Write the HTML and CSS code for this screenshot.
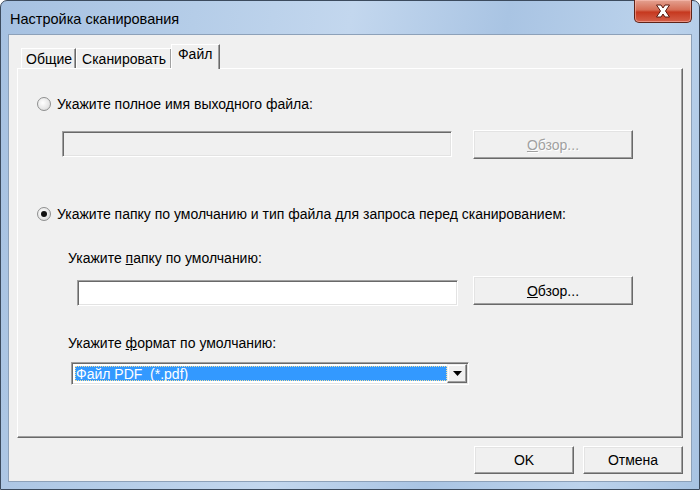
FILE: index.html
```html
<!DOCTYPE html>
<html lang="ru">
<head>
    <meta charset="UTF-8">
    <title>Настройка сканирования</title>
    <link rel="stylesheet" href="styles.css">
</head>
<body>
    <div class="window">
        <div class="titlebar">
            <span class="title">Настройка сканирования</span>
            <div class="close-btn">
                <svg width="24" height="16" viewBox="0 0 24 16">
                    <path d="M5.5 2 L10 2 L12 5 L14 2 L18.5 2 L14.5 8 L18.5 14 L14 14 L12 11 L10 14 L5.5 14 L9.5 8 Z" fill="#fff" stroke="#5a1a10" stroke-width="1" stroke-linejoin="round"/>
                </svg>
            </div>
        </div>
        <div class="client">
            <!-- Tabs -->
            <div class="tabs">
                <div class="tab">Общие</div>
                <div class="tab">Сканировать</div>
                <div class="tab active">Файл</div>
            </div>
            <div class="panel">
                <div class="opt">
                    <span class="radio"></span>
                    <span>Укажите полное имя выходного файла:</span>
                </div>
                <div class="field-row first">
                    <div class="edit disabled"></div>
                    <div class="btn browse disabled"><u>О</u>бзор...</div>
                </div>

                <div class="opt second">
                    <span class="radio checked"></span>
                    <span>Укажите папку по умолчанию и тип файла для запроса перед сканированием:</span>
                </div>
                <div class="label folder-label">Укажите <u>п</u>апку по умолчанию:</div>
                <div class="field-row folder">
                    <div class="edit"></div>
                    <div class="btn browse"><u>О</u>бзор...</div>
                </div>
                <div class="label format-label">Укажите <u>ф</u>ормат по умолчанию:</div>
                <div class="combo">
                    <div class="combo-value"><span>Файл PDF&nbsp; (*.pdf)</span></div>
                    <div class="combo-arrow">
                        <svg width="9" height="5" viewBox="0 0 9 5"><path d="M0 0 H9 L4.5 5 Z" fill="#000"/></svg>
                    </div>
                </div>
            </div>
            <div class="footer">
                <div class="btn dlg">OK</div>
                <div class="btn dlg">Отмена</div>
            </div>
        </div>
    </div>
</body>
</html>
```

FILE: styles.css
```css
body {
    margin: 0;
    padding: 0;
    font-family: "Liberation Sans", Arial, sans-serif;
    font-size: 14px;
    color: #000;
}
.window {
    width: 700px;
    height: 490px;
    box-sizing: border-box;
    border: 1px solid #3c4b5e;
    border-radius: 7px 7px 0 0;
    background: linear-gradient(100deg, #a6c1e1 0%, #b5cde8 25%, #c3d7ee 45%, #a9c4e3 65%, #bcd3ec 85%, #a8c3e2 100%);
    display: flex;
    flex-direction: column;
}
.titlebar {
    height: 33px;
    display: flex;
    align-items: flex-start;
    justify-content: space-between;
    padding-left: 9px;
}
.title {
    font-size: 14.5px;
    line-height: 15px;
    margin-top: 11px;
    color: #000;
}
.close-btn {
    width: 58px;
    height: 23px;
    margin-right: 7px;
    margin-top: -1px;
    box-sizing: border-box;
    border: 1px solid #5e2318;
    border-top: none;
    border-radius: 0 0 5px 5px;
    background: linear-gradient(#e4a291 0%, #d66d55 45%, #c6381f 55%, #d5604a 100%);
    box-shadow: inset 0 0 0 1px rgba(255, 200, 190, 0.5);
    display: flex;
    align-items: center;
    justify-content: center;
}
.client {
    flex: 1;
    margin: 0 7px 7px 7px;
    background: #f0f0f0;
    border: 1px solid #8da1b9;
    padding: 9px 8px 0 8px;
}
.tabs {
    display: flex;
    align-items: flex-end;
    height: 24px;
    padding-left: 4px;
    position: relative;
    z-index: 1;
}
.tab {
    height: 20px;
    line-height: 20px;
    padding: 0 5px;
    box-sizing: border-box;
    border: 1px solid #fff;
    border-right-color: #696969;
    border-bottom: none;
    box-shadow: inset -1px 0 #a0a0a0;
    background: #f0f0f0;
}
.tab:first-child {
    padding: 0 3px 0 4px;
}
.tab.active {
    height: 25px;
    line-height: 19px;
    padding: 0 7px 0 6px;
    margin-left: -1px;
    margin-bottom: -1px;
}
.panel {
    height: 370px;
    box-sizing: border-box;
    border: 1px solid #fff;
    border-right-color: #696969;
    border-bottom-color: #696969;
    box-shadow: inset -1px -1px #a0a0a0;
    padding-top: 27px;
}
.opt {
    display: flex;
    align-items: center;
    height: 15px;
    padding-left: 19px;
}
.opt.second {
    margin-top: 47px;
}
.radio {
    width: 12px;
    height: 12px;
    border: 1px solid #8e8f8f;
    border-radius: 50%;
    background: radial-gradient(circle at 40% 40%, #ffffff 0%, #e6e6e6 60%, #cfcfcf 100%);
    margin-right: 6px;
    display: flex;
    align-items: center;
    justify-content: center;
}
.radio.checked::after {
    content: "";
    width: 6px;
    height: 6px;
    border-radius: 50%;
    background: #111;
}
.field-row {
    display: flex;
    align-items: flex-start;
}
.field-row.first {
    margin-top: 19px;
    padding-left: 44px;
    gap: 21px;
}
.field-row.first .edit {
    width: 390px;
    margin-top: 1px;
}
.field-row.folder {
    margin-top: 10px;
    padding-left: 59px;
    gap: 15px;
}
.field-row.folder .edit {
    width: 381px;
    margin-top: 4px;
    background: #fff;
}
.edit {
    height: 26px;
    box-sizing: border-box;
    border: 1px solid;
    border-color: #a0a0a0 #fff #fff #a0a0a0;
    box-shadow: inset 1px 1px #696969, inset -1px -1px #e3e3e3;
    background: #fff;
}
.edit.disabled {
    background: #f0f0f0;
}
.btn {
    box-sizing: border-box;
    border: 1px solid;
    border-color: #fff #696969 #696969 #fff;
    box-shadow: inset -1px -1px #a0a0a0, inset 1px 1px #e3e3e3;
    background: #f0f0f0;
    display: flex;
    align-items: center;
    justify-content: center;
}
.btn.browse {
    width: 160px;
    height: 29px;
}
.btn.disabled {
    color: #a0a0a0;
    text-shadow: 1px 1px #fff;
}
.label {
    height: 15px;
    line-height: 15px;
    padding-left: 50px;
}
.folder-label {
    margin-top: 30px;
}
.format-label {
    margin-top: 30px;
}
.combo {
    margin-top: 11px;
    margin-left: 53px;
    width: 398px;
    height: 23px;
    box-sizing: border-box;
    border: 1px solid;
    border-color: #a0a0a0 #fff #fff #a0a0a0;
    box-shadow: inset 1px 1px #696969, inset -1px -1px #e3e3e3;
    background: #fff;
    display: flex;
    padding: 2px;
}
.combo-value {
    flex: 1;
    background: #3399ff;
    color: #fff;
    display: flex;
    align-items: center;
    padding-left: 1px;
    margin: 1px 0 1px 1px;
    outline: 1px dotted #f0e0a0;
    outline-offset: -1px;
}
.combo-value span {
    line-height: 14px;
}
.combo-arrow {
    width: 20px;
    box-sizing: border-box;
    border: 1px solid;
    border-color: #f0f0f0 #696969 #696969 #f0f0f0;
    box-shadow: inset -1px -1px #a0a0a0, inset 1px 1px #fff;
    background: #f0f0f0;
    display: flex;
    align-items: center;
    justify-content: center;
    margin: -1px -1px -1px 0;
}
.footer {
    display: flex;
    justify-content: flex-end;
    gap: 9px;
    margin-top: 8px;
}
.btn.dlg {
    width: 100px;
    height: 28px;
}
```
